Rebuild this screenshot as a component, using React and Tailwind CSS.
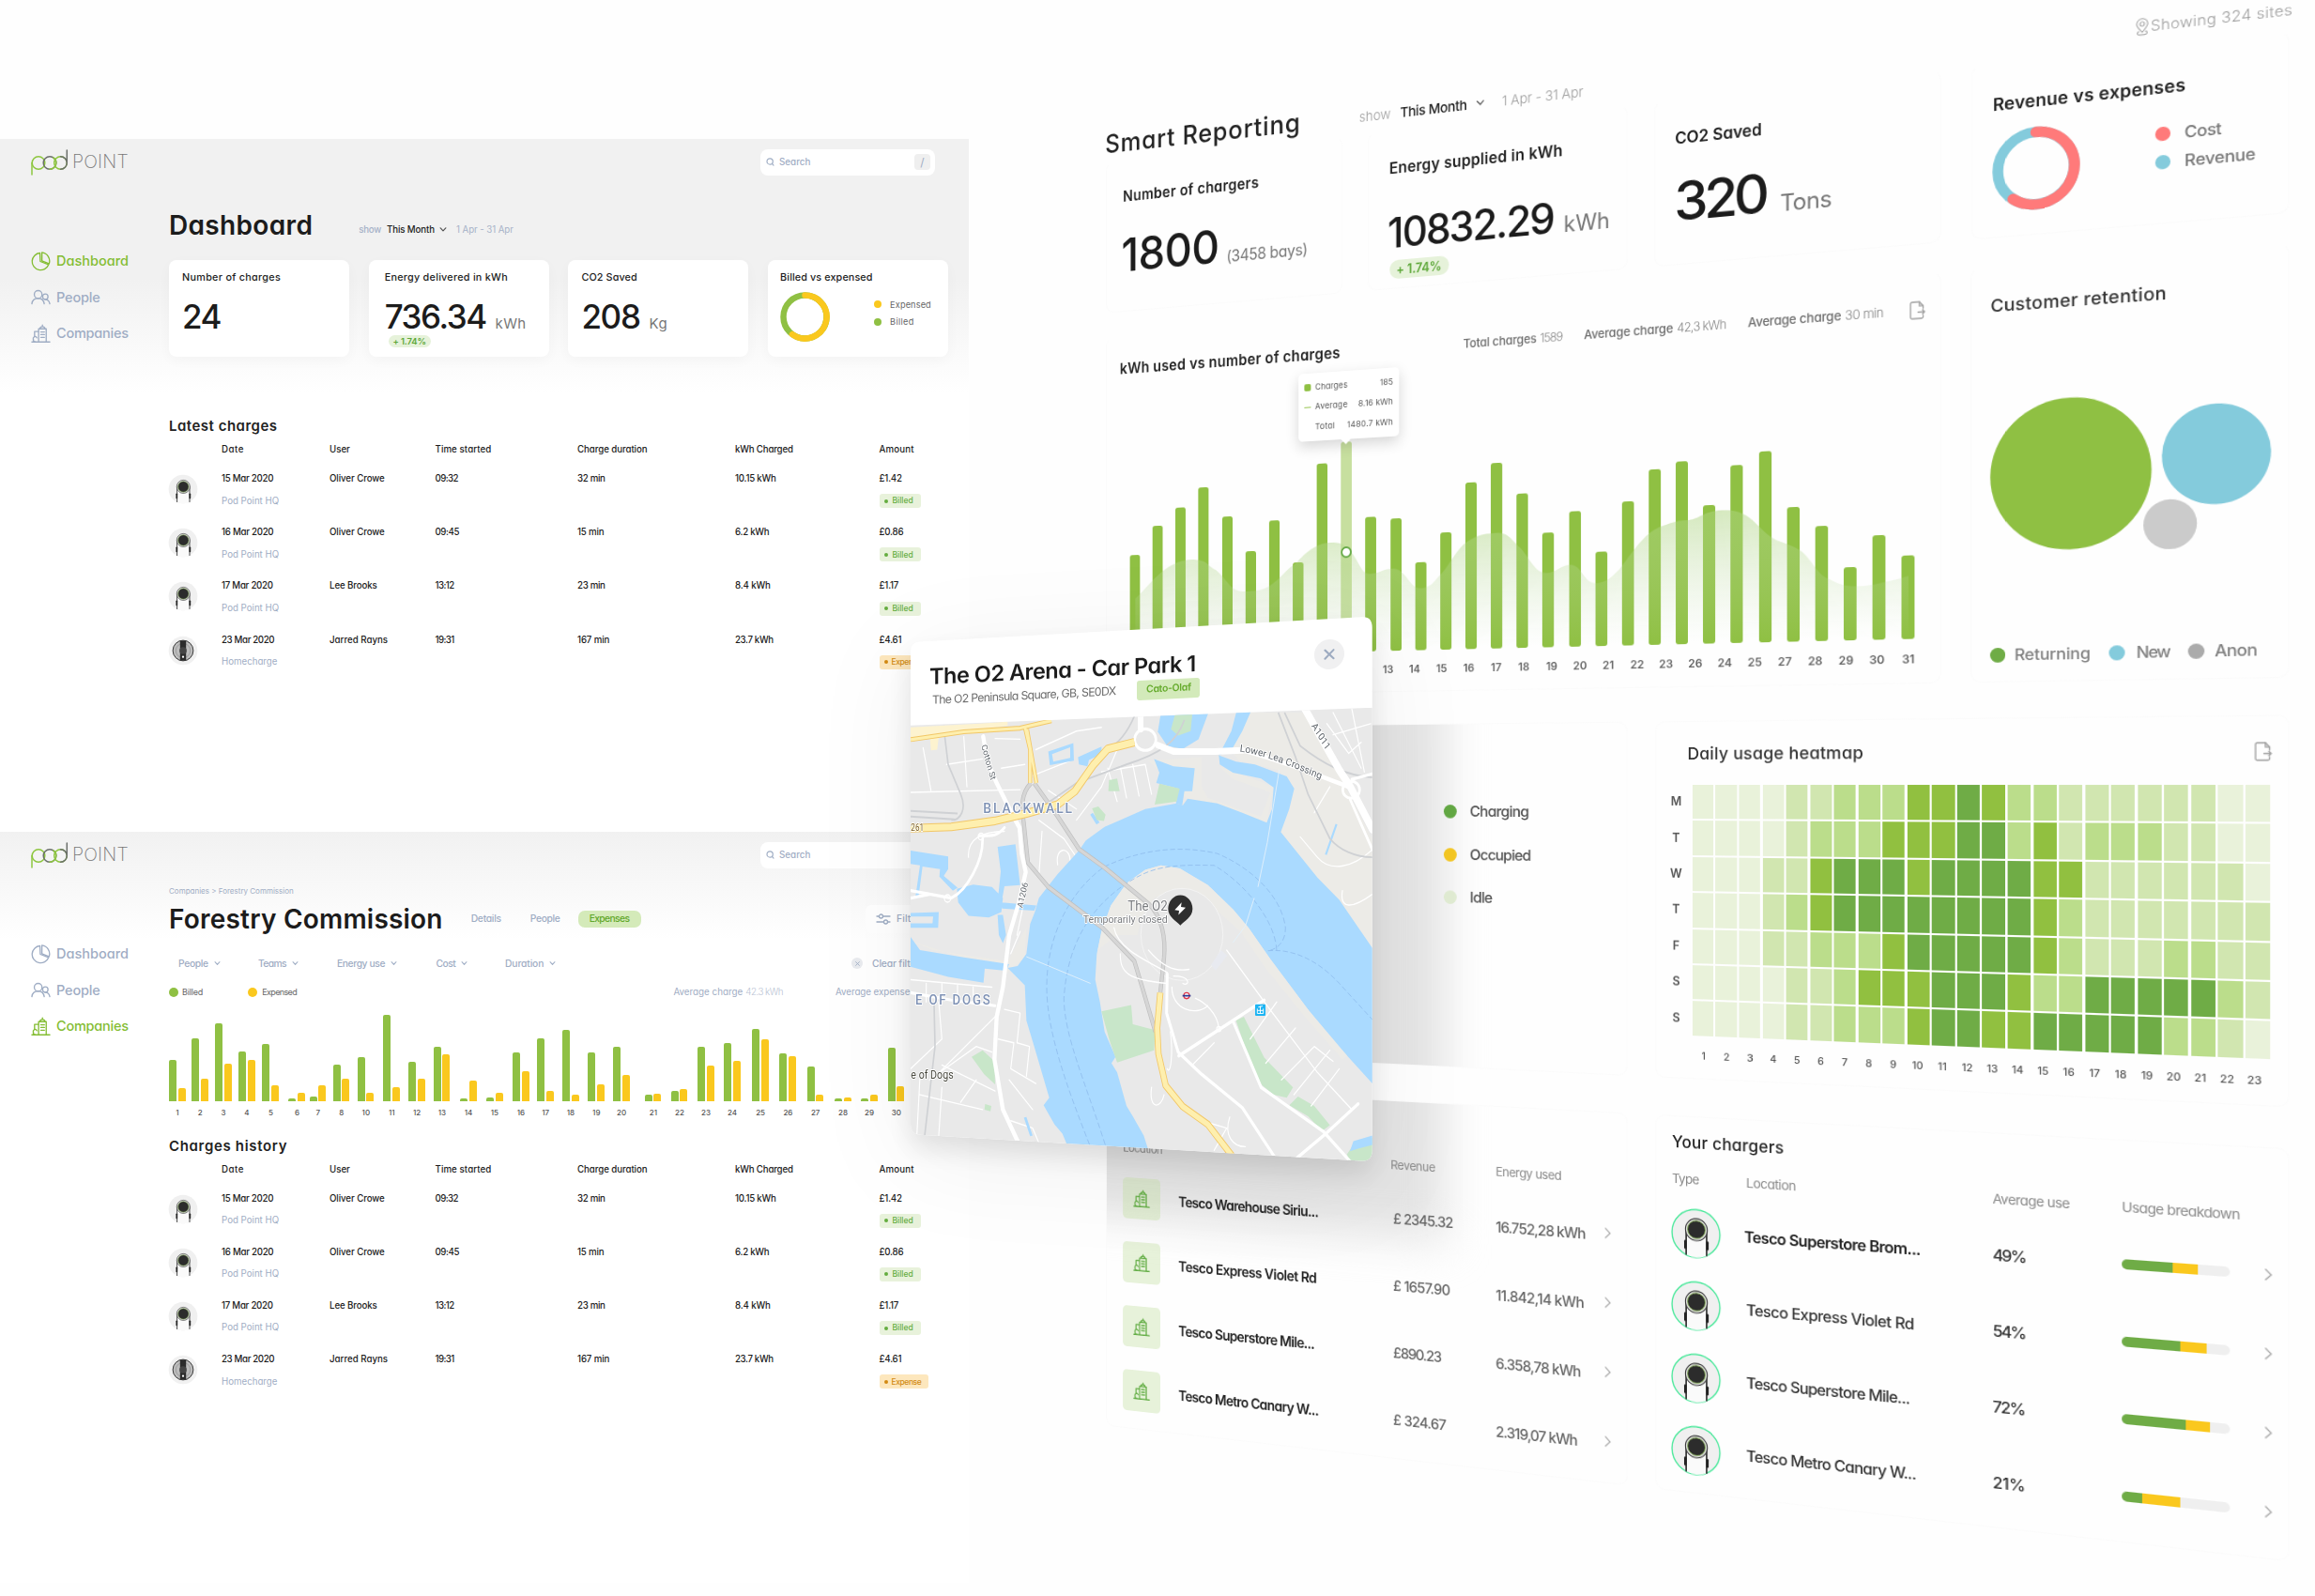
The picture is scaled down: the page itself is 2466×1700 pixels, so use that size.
import React, { useLayoutEffect, useRef } from "react";

/* Single-line text tracked so that it fills a given width. */
function Fit({ w, className = "", children }) {
  const ref = useRef(null);
  useLayoutEffect(() => {
    const el = ref.current;
    el.style.letterSpacing = "0px";
    el.style.letterSpacing = (w - el.offsetWidth) / el.textContent.length + "px";
  }, [w, children]);
  return (
    <span ref={ref} className={"block w-fit shrink-0 justify-self-start whitespace-nowrap leading-none " + className}>
      {children}
    </span>
  );
}

/* ---------- icons ---------- */

const PieIcon = () => (
  <svg viewBox="0 0 22 22" className="size-[21px]" fill="none" stroke="currentColor" strokeWidth="1.4" strokeLinejoin="round">
    <path d="M10 1.6A9.5 9.5 0 1 0 19.6 14.6L10.4 11Z" />
    <path d="M12.2 1v9.4l8 3.2A9.6 9.6 0 0 0 12.2 1Z" />
  </svg>
);
const PeopleIcon = () => (
  <svg viewBox="0 0 22 22" className="size-[21px]" fill="none" stroke="currentColor" strokeWidth="1.4" strokeLinecap="round">
    <circle cx="8" cy="8" r="4.3" />
    <path d="M1 18.5c.4-3.800 3.200-6.200 7-6.200s6.200 2.200 6.800 6.200" />
    <circle cx="16" cy="10.500" r="3" />
    <path d="M15.500 13.700c3-.2 5 1.800 5.500 4.800" />
  </svg>
);
const BuildingIcon = ({ className = "size-[21px]" }) => (
  <svg viewBox="0 0 22 22" className={className} fill="none" stroke="currentColor" strokeWidth="1.4" strokeLinecap="round" strokeLinejoin="round">
    <path d="M8.500 20V5.500h8.500V20M10 5.300C10.200 3.800 11.300 3 12.800 3s2.600.8 2.800 2.300M12.800 3V1.200" />
    <path d="M11 9h4M11 12h4M11 15h4M8.300 8.500H4V14M1 20.200h20" />
    <path d="M5 20a2.200 3 0 1 1 1.500-4.500M2.800 17.500v2.500" />
  </svg>
);
const Chevron = ({ className }) => (
  <svg viewBox="0 0 10 6" className={className} fill="none" stroke="currentColor" strokeWidth="1.5" strokeLinecap="round" strokeLinejoin="round">
    <path d="M1.500 1 5 4.800 8.500 1" />
  </svg>
);
const Next = () => (
  <svg viewBox="0 0 7 12" className="h-3 w-[7px] text-[#a8a8a8]" fill="none" stroke="currentColor" strokeWidth="1.2" strokeLinecap="round">
    <path d="M1 1l5 5-5 5" />
  </svg>
);
const Cross = ({ className }) => (
  <svg viewBox="0 0 10 10" className={className} fill="none" stroke="currentColor" strokeWidth="1.7" strokeLinecap="round">
    <path d="M1.200 1.200l7.600 7.600M8.800 1.200 1.200 8.800" />
  </svg>
);
const ExportIcon = () => (
  <svg viewBox="0 0 16 19" className="h-[19px] w-4 text-[#a3a3a3]" fill="none" stroke="currentColor" strokeWidth="1.300" strokeLinejoin="round" strokeLinecap="round">
    <path d="M13.500 8V5.200L9.800 1H2.500A1.500 1.500 0 0 0 1 2.500v14A1.500 1.500 0 0 0 2.500 18H12a1.500 1.500 0 0 0 1.500-1.500V15" />
    <path d="M9.800 1v4.200h3.700M8.500 11.500H15M13 9.500l2 2-2 2" />
  </svg>
);
const SearchIcon = () => (
  <svg viewBox="0 0 10 10" className="size-[9px]" fill="none" stroke="currentColor" strokeWidth="1.300" strokeLinecap="round">
    <circle cx="4.600" cy="4.400" r="3.500" />
    <path d="M7.200 7l1.700 2" />
  </svg>
);
const PinIcon = () => (
  <svg viewBox="0 0 15 19" className="h-[18px] w-[14px]" fill="none" stroke="currentColor" strokeWidth="1">
    <path d="M7.500 15C4.500 11.500 2 9 2 6.200a5.500 5.500 0 0 1 11 0C13 9 10.500 11.500 7.500 15Z" />
    <circle cx="7.500" cy="6.200" r="2.200" />
    <path d="M4.500 14c-1.600.5-1.900 1.200-1.900 1.800 0 1 2 2 4.900 2s4.900-1 4.900-2c0-.6-.3-1.300-1.900-1.800" />
  </svg>
);
const SlidersIcon = () => (
  <svg viewBox="0 0 16 12" className="h-3 w-4" fill="none" stroke="currentColor" strokeWidth="1.300" strokeLinecap="round">
    <path d="M1 3h2.500M7.500 3H15M1 9h7.500M12.500 9H15" />
    <circle cx="5.500" cy="3" r="2" />
    <circle cx="10.500" cy="9" r="2" />
  </svg>
);

function Charger({ className, ring }) {
  return (
    <svg viewBox="0 0 50 50" className={className}>
      <circle cx="25" cy="25" r="24" fill="#f0f0f0" stroke={ring || "none"} strokeWidth="1.300" />
      <path d="M15.300 20v27M35.700 20v27" stroke="#2d2d2d" strokeWidth="1.700" />
      <path d="M16 20h19v27a24 24 0 0 1-19 0Z" fill="#fafafa" />
      <rect x="13.200" y="32" width="2.600" height="9" rx="1.200" fill="#222" />
      <rect x="35.200" y="32" width="2.600" height="9" rx="1.200" fill="#222" />
      <circle cx="25.500" cy="21" r="11" fill="#dcdcdc" stroke="#3a3a3a" strokeWidth="1" />
      <circle cx="25.500" cy="21" r="8.900" fill="#2c2c2c" stroke="#8bb85a" strokeWidth=".8" />
    </svg>
  );
}
const HomeCharger = ({ className }) => (
  <svg viewBox="0 0 50 50" className={className}>
    <circle cx="25" cy="25" r="24" fill="#f1f1f1" />
    <circle cx="25" cy="25" r="17" fill="#bdbdbd" stroke="#333" strokeWidth="1.500" />
    <circle cx="25" cy="25" r="12" fill="none" stroke="#8a8a8a" strokeWidth="1" />
    <path d="M20 8.500h10v33H20Z" fill="#2b2b2b" />
    <circle cx="25" cy="25" r="6" fill="#444" />
    <circle cx="25" cy="35.500" r="1.800" fill="#fff" />
  </svg>
);

const Logo = () => (
  <div className="flex items-center">
    <svg viewBox="0 0 40 28" className="h-7 w-10" fill="none" strokeWidth="1.500" strokeLinecap="round">
      <path d="M1 27V14.500" stroke="#8dc63f" />
      <circle cx="8" cy="14.500" r="6.800" stroke="#8dc63f" />
      <circle cx="20" cy="14.500" r="6.800" stroke="#6b6f6b" />
      <path d="M20 21.300a6.800 6.800 0 0 0 6.800-6.800 6.800 6.800 0 0 0-3-5.600" stroke="#8dc63f" />
      <circle cx="31.500" cy="14.500" r="6.800" stroke="#8dc63f" />
      <path d="M31.500 7.700a6.800 6.800 0 0 1 6.800 6.800V1M38.300 14.500a6.800 6.800 0 0 1-6.800 6.800" stroke="#6b6f6b" />
    </svg>
    <Fit w={60} className="ml-[4px] text-[19.500px] font-extralight text-[#777]">POINT</Fit>
  </div>
);

/* ---------- shared pieces for the two flat screens ---------- */

const NAV = [
  ["Dashboard", PieIcon, 77],
  ["People", PeopleIcon, 47],
  ["Companies", BuildingIcon, 77],
];

function Sidebar({ active }) {
  return (
    <nav className="flex w-[180px] shrink-0 flex-col pl-[33px] pt-[61px]">
      {NAV.map(([label, Icon, w]) => (
        <div key={label} className={"flex h-[38.500px] items-center gap-[6px] " + (label === active ? "text-[#84bd33]" : "text-[#9fadc4]")}>
          <Icon />
          <Fit w={w} className="text-[14.500px] font-medium">{label}</Fit>
        </div>
      ))}
    </nav>
  );
}

const TopBar = () => (
  <div className="flex h-[50px] items-start justify-between pl-[33px] pr-[36px] pt-[10.500px]">
    <Logo />
    <div className="flex h-[28px] w-[186px] items-center rounded-lg bg-white pl-[6px] pr-[5px] text-[#9fadc4]">
      <SearchIcon />
      <Fit w={33} className="ml-[5px] text-[9.800px] font-medium">Search</Fit>
      <span className="ml-auto flex h-[17px] w-[17px] items-center justify-center rounded bg-[#efefef] text-[12px] leading-none">/</span>
    </div>
  </div>
);

const ROWS = [
  ["15 Mar 2020", 55, "Oliver Crowe", 59, "09:32", 24, "32 min", 30, "10.15 kWh", 44, "£1.42", 24],
  ["16 Mar 2020", 55, "Oliver Crowe", 59, "09:45", 26, "15 min", 28, "6.2 kWh", 36, "£0.86", 26],
  ["17 Mar 2020", 55, "Lee Brooks", 51, "13:12", 20, "23 min", 30, "8.4 kWh", 38, "£1.17", 21],
  ["23 Mar 2020", 56, "Jarred Rayns", 62, "19:31", 20, "167 min", 34, "23.7 kWh", 41, "£4.61", 24],
];

function ChargeTable({ title, titleWidth }) {
  const cols = "grid grid-cols-[56px_115px_112.5px_151.5px_168px_153.5px_auto]";
  return (
    <section className="text-[9.700px] font-medium text-[#1c1c1c]">
      <Fit w={titleWidth} className="text-[15px] font-semibold text-[#222]">{title}</Fit>
      <div className={cols + " mt-[6.500px] h-[23px] items-center"}>
        <span />
        <Fit w={24}>Date</Fit>
        <Fit w={22}>User</Fit>
        <Fit w={60}>Time started</Fit>
        <Fit w={75}>Charge duration</Fit>
        <Fit w={62}>kWh Charged</Fit>
        <Fit w={37}>Amount</Fit>
      </div>
      <div className="pt-[2px]">
        {ROWS.map((r, i) => (
          <div key={i} className={cols + " h-[57.200px] pt-[12.500px]"}>
            {i === 3 ? <HomeCharger className="-ml-px size-[32px]" /> : <Charger className="-ml-px size-[32px]" />}
            <div className="flex flex-col gap-[13.800px]">
              <Fit w={r[1]}>{r[0]}</Fit>
              <Fit w={i === 3 ? 59 : 61} className="font-normal text-[#9fadc4]">{i === 3 ? "Homecharge" : "Pod Point HQ"}</Fit>
            </div>
            <Fit w={r[3]}>{r[2]}</Fit>
            <Fit w={r[5]}>{r[4]}</Fit>
            <Fit w={r[7]}>{r[6]}</Fit>
            <Fit w={r[9]}>{r[8]}</Fit>
            <div className="flex flex-col items-start gap-[11.500px]">
              <Fit w={r[11]}>{r[10]}</Fit>
              {i === 3 ? (
                <span className="flex h-[15px] w-[52px] items-center gap-[4px] rounded-[3px] bg-[#fde7bd] pl-[5px] text-[8.500px] font-medium text-[#d28a12]">
                  <i className="size-[4px] rounded-full bg-[#d28a12]" />
                  <Fit w={32}>Expense</Fit>
                </span>
              ) : (
                <span className="flex h-[15px] w-[44px] items-center gap-[5px] rounded-[3px] bg-[#e8f2db] pl-[5px] text-[8.500px] font-medium text-[#64ad3f]">
                  <i className="size-[4px] rounded-full bg-[#64ad3f]" />
                  <Fit w={22}>Billed</Fit>
                </span>
              )}
            </div>
          </div>
        ))}
      </div>
    </section>
  );
}

/* ---------- screen 1: dashboard ---------- */

function StatCard({ label, w, pad, children }) {
  return (
    <div className={"h-[103px] rounded-lg bg-white pt-[13.500px] shadow-[0_4px_14px_rgba(0,0,0,0.03)] " + pad}>
      <Fit w={w} className="text-[10.800px] font-medium text-[#1c1c1c]">{label}</Fit>
      {children}
    </div>
  );
}

function Dashboard() {
  return (
    <section className="h-[738px] w-[1032px] bg-[linear-gradient(#f1f1f1_0px,#f1f1f1_150px,#fff_270px)]">
      <TopBar />
      <div className="flex">
        <Sidebar active="Dashboard" />
        <main className="w-[830px]">
          <div className="flex h-[79px] items-center pt-[5px]">
            <Fit w={153} className="text-[28px] font-semibold text-[#1c1c1c]">Dashboard</Fit>
            <div className="mt-[9px] ml-[49px] flex items-center text-[9.700px] font-medium text-[#a6b2c8]">
              <Fit w={24}>show</Fit>
              <Fit w={51} className="ml-[6px] text-[#1c1c1c]">This Month</Fit>
              <Chevron className="ml-[5px] w-[8px] text-[#555]" />
              <Fit w={61} className="ml-[10px] font-normal">1 Apr - 31 Apr</Fit>
            </div>
          </div>
          <div className="grid grid-cols-4 gap-[20.800px]">
            <StatCard label="Number of charges" w={105} pad="pl-[14px]">
              <Fit w={41} className="mt-[19px] text-[35px] font-medium text-[#1c1c1c]">24</Fit>
            </StatCard>
            <StatCard label="Energy delivered in kWh" w={131} pad="pl-[17px]">
              <div className="mt-[19px] flex items-baseline">
                <Fit w={108} className="text-[35px] font-medium text-[#1c1c1c]">736.34</Fit>
                <Fit w={33} className="ml-[10px] text-[15px] text-[#777]">kWh</Fit>
              </div>
              <span className="mt-[2px] ml-[4px] flex h-[13px] w-[45px] items-center justify-center rounded-full bg-[#e6f2da] text-[9.500px] font-semibold text-[#5ea83a]">
                <Fit w={35}>+ 1.74%</Fit>
              </span>
            </StatCard>
            <StatCard label="CO2 Saved" w={59} pad="pl-[14px]">
              <div className="mt-[19px] flex items-baseline">
                <Fit w={62} className="text-[35px] font-medium text-[#1c1c1c]">208</Fit>
                <Fit w={20} className="ml-[10px] text-[15px] text-[#777]">Kg</Fit>
              </div>
            </StatCard>
            <StatCard label="Billed vs expensed" w={99} pad="pl-[13px]">
              <div className="mt-[10px] flex">
                <svg viewBox="0 0 53 53" className="size-[53px]" fill="none" strokeWidth="6.500">
                  <circle cx="26.500" cy="26.500" r="23" stroke="#8fc043" />
                  <path d="M26.500 3.500a23 23 0 1 1-13.500 41.600" stroke="#fac81e" strokeLinecap="round" />
                </svg>
                <div className="ml-[47px] mt-[8.500px] flex flex-col gap-[9px] text-[9.200px] text-[#666]">
                  <span className="flex items-center gap-[9px]"><i className="size-2 rounded-full bg-[#fac81e]" /><Fit w={44}>Expensed</Fit></span>
                  <span className="flex items-center gap-[9px]"><i className="size-2 rounded-full bg-[#8fc043]" /><Fit w={26}>Billed</Fit></span>
                </div>
              </div>
            </StatCard>
          </div>
          <div className="mt-[66px]">
            <ChargeTable title="Latest charges" titleWidth={116} />
          </div>
        </main>
      </div>
    </section>
  );
}

/* ---------- screen 2: company expenses ---------- */

/* [label, offset, billed height, expensed height] */
const EXPENSES = [
  [1, 0, 44, 14], [2, 24.2, 67, 24], [3, 49.1, 83, 40], [4, 74, 53, 44], [5, 99.500, 61, 17],
  [6, 127.500, 3, 9], [7, 149.900, 5, 17], [8, 174.700, 39, 24], [10, 200.900, 47, 9], [11, 228.300, 92, 15],
  [12, 255.100, 42, 24], [13, 281.900, 58, 50], [14, 310, 3, 22], [15, 338, 4, 9], [16, 366, 52, 32],
  [17, 392.200, 67, 11], [18, 419, 76, 7], [19, 446.400, 52, 18], [20, 473.200, 58, 28], [21, 507, 7, 8],
  [22, 535, 11, 13], [23, 563.100, 58, 38], [24, 591.200, 62, 43], [25, 621.200, 77, 66], [26, 650.500, 51, 48],
  [27, 679.800, 37, 7], [28, 709.200, 3, 4], [29, 737.200, 3, 7], [30, 766, 57, 16],
];

function ExpenseChart() {
  return (
    <div className="mt-[10px] flex h-[107px] items-end">
      {EXPENSES.map(([d, x, a, b], i) => (
        <div key={d} className="shrink-0" style={{ width: i < EXPENSES.length - 1 ? EXPENSES[i + 1][1] - x : 18 }}>
          <div className="flex items-end gap-[1.600px]">
            <i className="w-2 rounded-t-[2px] bg-[#8fc043]" style={{ height: a }} />
            <i className="w-2 rounded-t-[2px] bg-[#fac81e]" style={{ height: b }} />
          </div>
          <div className="mt-[8px] w-[18px] text-center text-[8px] leading-none font-medium text-[#555]">{d}</div>
        </div>
      ))}
    </div>
  );
}

const FILTERS = [["People", 32, 85], ["Teams", 30, 84], ["Energy use", 51, 105.500], ["Cost", 21, 73.500], ["Duration", 41, 60]];

function Company() {
  return (
    <section className="h-[800px] w-[1032px] bg-[linear-gradient(#f1f1f1_0px,#fff_115px)]">
      <TopBar />
      <div className="flex">
        <Sidebar active="Companies" />
        <main className="w-[852px]">
          <div className="flex h-[26px] items-center">
            <Fit w={133} className="text-[8px] text-[#9fadc4]">Companies &gt; Forestry Commission</Fit>
          </div>
          <div className="flex h-[33px] items-center text-[10.300px] font-medium text-[#9fadc4]">
            <Fit w={292} className="text-[28px] font-semibold text-[#1c1c1c]">Forestry Commission</Fit>
            <Fit w={32} className="ml-[30px]">Details</Fit>
            <Fit w={32} className="ml-[31px]">People</Fit>
            <span className="ml-[19px] flex h-[18px] w-[67px] items-center justify-center rounded-[7px] bg-[#d4eab9] text-[#62a82c]">
              <Fit w={43}>Expenses</Fit>
            </span>
            <span className="ml-auto flex h-[30px] w-[110px] items-center gap-[6px] rounded-md bg-white pl-[11px]">
              <SlidersIcon /><Fit w={31}>Filters</Fit>
            </span>
          </div>
          <div className="mt-[16px] flex h-[30px] items-center pl-[10px] text-[10.300px] font-medium text-[#9fadc4]">
            {FILTERS.map(([t, w, cell]) => (
              <span key={t} className="flex items-center gap-[6px]" style={{ width: cell }}>
                <Fit w={w}>{t}</Fit>
                <Chevron className="w-[7px]" />
              </span>
            ))}
            <span className="ml-auto flex w-[125px] items-center gap-[10px]">
              <i className="flex size-3 items-center justify-center rounded-full bg-[#e9ebef]"><Cross className="size-[5px]" /></i>
              <Fit w={56}>Clear filters</Fit>
            </span>
          </div>
          <div className="flex h-[31px] items-center text-[9px] text-[#666]">
            <i className="size-[10px] rounded-full bg-[#8fc043]" />
            <Fit w={22} className="ml-[4px]">Billed</Fit>
            <i className="ml-[48px] size-[10px] rounded-full bg-[#fac81e]" />
            <Fit w={37} className="ml-[5px]">Expensed</Fit>
            <span className="ml-auto flex gap-[3px] text-[9.800px] text-[#9fadc4]">
              <Fit w={74}>Average charge</Fit>
              <Fit w={40} className="font-light text-[#b9c3d4]">42.3 kWh</Fit>
            </span>
            <span className="ml-[56px] w-[142px] text-[9.800px] text-[#9fadc4]"><Fit w={79}>Average expense</Fit></span>
          </div>
          <ExpenseChart />
          <div className="mt-[23.500px]">
            <ChargeTable title="Charges history" titleWidth={126} />
          </div>
        </main>
      </div>
    </section>
  );
}

/* ---------- tilted reporting board ---------- */

const panel = "rounded-[10px] border border-[#fbfbfb]";

function Metric({ title, tw, pad = "pl-[21px]", children }) {
  return (
    <div className={"h-[177px] pt-[33px] border-t-transparent! " + pad + " " + panel}>
      <Fit w={tw} className="text-[17px] font-semibold text-[#222]">{title}</Fit>
      {children}
    </div>
  );
}

const LOAD = [
  119, 152, 172, 194, 159, 118, 151.500, 103, 214, 237, 151, 148, 98, 129.500, 184, 204, 169, 124.500, 147, 102,
  154.500, 188, 195, 147, 188, 201, 141, 120, 76, 107.500, 86,
];
const LOAD_LABELS = [13, 14, 15, 16, 17, 18, 19, 20, 21, 22, 23, 26, 24, 25, 27, 28, 29, 30, 31];

const WAVE =
  "M48 618C65 605 85 575 119 575C140 575 140 584 150 588C165 600 168 613 184 614C205 614 210 612 216 609C232 600 236 590 249 584C262 570 275 562 291 562C302 562 306 564 310 569C325 580 325 598 337 599C350 599 352 594 364 594C380 594 384 617 397 617C410 617 412 610 422 601C432 590 436 580 447 570C458 562 468 559 484 559C498 559 500 566 511 576C522 588 528 605 541 605C552 605 556 597 567 597C580 597 582 618 596 618C608 617 612 612 621 604C640 580 650 564 668 559C680 555 684 554 694 554C706 554 712 545 731 545C745 545 750 548 757 552C768 560 776 573 788 579C800 584 806 586 813 591C826 602 830 618 843 622C854 629 862 630 873 630C884 630 890 628 897 627C906 625 912 624 922 621V686H48Z";

function UsageChart() {
  return (
    <div className={"relative flex h-[422px] w-[944px] flex-col pt-[29px] pl-[17px] pr-[14px] border-t-transparent! " + panel}>
      <div className="flex h-[17px] items-center text-[13px] text-[#6d6d6d]">
        <Fit w={274} className="text-[17px] font-semibold text-[#222]">kWh used vs number of charges</Fit>
        <Fit w={83} className="ml-[144px] font-medium">Total charges</Fit>
        <Fit w={25} className="ml-[4px] font-light text-[#888]">1589</Fit>
        <Fit w={97} className="ml-[24px] font-medium">Average charge</Fit>
        <Fit w={52} className="ml-[4px] font-light text-[#888]">42,3 kWh</Fit>
        <Fit w={96} className="ml-[23px] font-medium">Average charge</Fit>
        <Fit w={39} className="ml-[4px] font-light text-[#888]">30 min</Fit>
        <span className="ml-auto"><ExportIcon /></span>
      </div>
      <div className="mt-[88.500px] ml-[13px] mr-[10.500px] flex h-[240px] items-end justify-between">
        {LOAD.map((h, i) => (
          <i key={i} className={"w-[13px] rounded-[3px] " + (i === 9 ? "bg-[#c7df9f]" : "bg-[#8fc043]")} style={{ height: h }} />
        ))}
      </div>
      <div className="mt-[15px] ml-auto mr-[7px] flex w-[583px] justify-between text-[12px] leading-none font-semibold text-[#666]">
        {LOAD_LABELS.map((d) => (
          <span key={d} className="w-[20px] text-center">{d}</span>
        ))}
      </div>
      <svg viewBox="48 540 874 146" preserveAspectRatio="none" className="absolute top-[229px] left-[37px] h-[146px] w-[874px]">
        <defs>
          <linearGradient id="wave" x1="0" y1="0" x2="0" y2="1">
            <stop offset="0" stopColor="#aed581" stopOpacity=".5" />
            <stop offset="1" stopColor="#c8e0b8" stopOpacity="0" />
          </linearGradient>
        </defs>
        <path d={WAVE} fill="url(#wave)" />
      </svg>
      <i className="absolute top-[256px] left-[291.500px] size-[13px] rounded-full border-2 border-[#63a844] bg-white" />
      <div className="absolute top-[57.500px] left-[241px] flex h-[77px] w-[120px] flex-col justify-center gap-[13px] rounded-[5px] bg-white px-[7px] text-[9.500px] text-[#555] shadow-[0_6px_16px_rgba(0,0,0,0.16)]">
        <span className="flex items-center"><i className="mr-[5px] size-2 rounded-[2px] bg-[#8fc043]" /><Fit w={39}>Charges</Fit><Fit w={16} className="ml-auto">185</Fit></span>
        <span className="flex items-center"><i className="mr-[5px] h-px w-2 bg-[#8fc043]" /><Fit w={39}>Average</Fit><Fit w={41} className="ml-auto">8.16 kWh</Fit></span>
        <span className="flex items-center pl-[13px]"><Fit w={24}>Total</Fit><Fit w={54} className="ml-auto">1480.7 kWh</Fit></span>
        <i className="absolute bottom-[-4px] left-[53px] size-2 rotate-45 bg-white" />
      </div>
    </div>
  );
}

const HEAT = [
  ["M", "00001122233432211111100"],
  ["T", "00001222333442312221100"],
  ["W", "00011344434444331111110"],
  ["T", "00012344444444321111111"],
  ["F", "00011222344444321112211"],
  ["S", "00001123334443224444421"],
  ["S", "00001122234433444442210"],
];
const HEAT_COLOURS = ["bg-[#e9f2da]", "bg-[#d1e6b0]", "bg-[#bbdd8b]", "bg-[#91c040]", "bg-[#6fac46]"];

const LOCATIONS = [
  ["Tesco Warehouse Siriu...", 173, "£ 2345.32", 69, "16.752,28 kWh", 100],
  ["Tesco Express Violet Rd", 171, "£ 1657.90", 66, "11.842,14 kWh", 99],
  ["Tesco Superstore Mile...", 168, "£890.23", 56, "6.358,78 kWh", 95],
  ["Tesco Metro Canary W...", 173, "£ 324.67", 61, "2.319,07 kWh", 91],
];
const CHARGERS = [
  ["Tesco Superstore Brom...", 179, "49%", 47, 24],
  ["Tesco Express Violet Rd", 171, "54%", 55, 24],
  ["Tesco Superstore Mile...", 167, "72%", 60, 22],
  ["Tesco Metro Canary W...", 173, "21%", 19, 36],
];

function Board() {
  const locCols = "grid grid-cols-[71px_259px_121.5px_121px_auto] items-center";
  const chCols = "grid grid-cols-[78.500px_248px_122.500px_129.500px_auto] items-center";
  return (
    <div className="col-start-1 row-start-1 ml-[1103px] h-[1700px] w-[1302px] origin-[697px_836px] pr-[23px] pl-[10px] [transform:matrix3d(1,0,0,-0.00015232,0,1,0,0,0,0,1,0,0,0,0,1)]">
      <div className="flex h-[104px] items-end">
        <div className="flex h-10 w-full items-center text-[15px] text-[#a0a0a0]">
          <Fit w={246} className="-mt-[3px] -ml-px text-[29.500px] font-medium text-[#222]">Smart Reporting</Fit>
          <Fit w={37} className="mt-px ml-[70px] font-light">show</Fit>
          <Fit w={78} className="mt-px ml-[11px] font-medium text-[#222]">This Month</Fit>
          <Chevron className="ml-[10px] w-[10px] text-[#666]" />
          <Fit w={91} className="ml-[20px] font-light">1 Apr - 31 Apr</Fit>
          <span className="ml-auto mr-[-3px] flex items-center text-[14.500px] font-light">
            <PinIcon /><Fit w={128} className="ml-px">Showing 324 sites</Fit>
          </span>
        </div>
      </div>

      <div className="grid grid-cols-4 gap-[29.400px]">
        <Metric title="Number of chargers" tw={172}>
          <div className="mt-[33px] flex items-baseline">
            <Fit w={124} className="-ml-[2px] text-[54px] font-medium text-[#1c1c1c]">1800</Fit>
            <Fit w={100} className="ml-[9px] text-[18px] text-[#777]">(3458 bays)</Fit>
          </div>
        </Metric>
        <Metric title="Energy supplied in kWh" tw={198} pad="pl-[25px]">
          <div className="mt-[40px] flex items-baseline">
            <Fit w={190} className="-ml-[2px] text-[46px] font-medium text-[#1c1c1c]">10832.29</Fit>
            <Fit w={51} className="ml-[11px] text-[24px] text-[#777]">kWh</Fit>
          </div>
          <span className="mt-[8px] flex h-[21px] w-[69px] items-center justify-center rounded-full bg-[#e6f2da] text-[14px] font-semibold text-[#5ea83a]">
            <Fit w={53}>+ 1.74%</Fit>
          </span>
        </Metric>
        <Metric title="CO2 Saved" tw={91}>
          <div className="mt-[29px] flex items-baseline">
            <Fit w={97} className="-ml-px text-[58px] font-medium text-[#1c1c1c]">320</Fit>
            <Fit w={53} className="ml-[15px] text-[24px] text-[#777]">Tons</Fit>
          </div>
        </Metric>
        <Metric title="Revenue vs expenses" tw={181} pad="pl-[20px]">
          <div className="mt-[16.500px] flex">
            <svg viewBox="0 0 84 84" className="-ml-px size-[84px]" fill="none" strokeWidth="10.500">
              <circle cx="42" cy="42" r="36.500" stroke="#84cbdc" />
              <path d="M42 5.500a36.500 36.500 0 1 1-22 65.500" stroke="#ff7a7a" strokeLinecap="round" />
            </svg>
            <div className="ml-[70.500px] mt-[12.500px] flex flex-col gap-[12px] text-[16px] font-medium text-[#777]">
              <span className="flex items-center gap-[12.500px]"><i className="size-[14px] rounded-full bg-[#ff7a7a]" /><Fit w={33}>Cost</Fit></span>
              <span className="flex items-center gap-[12.500px]"><i className="size-[14px] rounded-full bg-[#84cbdc]" /><Fit w={64}>Revenue</Fit></span>
            </div>
          </div>
        </Metric>
      </div>

      <div className="mt-[29px] flex gap-[29.400px]">
        <UsageChart />
        <div className={"flex-1 pt-[30px] pl-[18px] border-t-transparent! " + panel}>
          <Fit w={166} className="text-[17.500px] font-medium text-[#333]">Customer retention</Fit>
          <svg viewBox="1002 446 262 158" className="mt-[87.500px] -ml-px h-[158px] w-[262px]">
            <circle cx="1079.400" cy="523.600" r="76.200" fill="#8fc043" />
            <circle cx="1214.500" cy="511.100" r="49.300" fill="#84cbdc" />
            <circle cx="1172.600" cy="578.400" r="24.600" fill="#cbcbcb" />
          </svg>
          <div className="mt-[92px] flex h-4 items-center text-[16px] font-medium text-[#808080]">
            <i className="size-[15px] rounded-full bg-[#6fac46]" /><Fit w={72} className="ml-[8px]">Returning</Fit>
            <i className="ml-[17px] size-[15px] rounded-full bg-[#84cbdc]" /><Fit w={31} className="ml-[11px]">New</Fit>
            <i className="ml-[17px] size-[15px] rounded-full bg-[#ababab]" /><Fit w={38} className="ml-[9px]">Anon</Fit>
          </div>
        </div>
      </div>

      <div className="mt-[35.500px] grid h-[381.500px] grid-cols-2 gap-[30px]">
        <div className={"relative overflow-hidden " + panel}>
          <div className="absolute -top-40 -bottom-40 -left-40 w-[575px] bg-[#e4e4e4] blur-[24px]" />
          <div className="relative flex flex-col gap-[31.500px] pt-[89px] pl-[413px] text-[16.500px] font-medium text-[#505050]">
            <span className="flex h-4 items-center gap-[15px]"><i className="size-[15px] rounded-full bg-[#63a844]" /><Fit w={67}>Charging</Fit></span>
            <span className="flex h-4 items-center gap-[15px]"><i className="size-[15px] rounded-full bg-[#f3c623]" /><Fit w={69}>Occupied</Fit></span>
            <span className="flex h-4 items-center gap-[15px]"><i className="size-[15px] rounded-full bg-[#e0ebd2]" /><Fit w={26}>Idle</Fit></span>
          </div>
        </div>
        <div className={"pt-[25.500px] pl-[12px] pr-[16px] " + panel}>
          <div className="flex h-[18px] items-center justify-between pl-[22px]">
            <Fit w={182} className="text-[17.500px] font-medium text-[#333]">Daily usage heatmap</Fit>
            <span className="-mr-[2px]"><ExportIcon /></span>
          </div>
          <div className="mt-[24px] flex flex-col gap-[2px]">
            {HEAT.map(([d, cells], r) => (
              <div key={r} className="flex h-[36.400px] items-stretch gap-[2.400px]">
                <span className="mr-[5px] flex w-[20px] items-center justify-center pt-px text-[12.500px] font-semibold text-[#555]">{d}</span>
                {cells.split("").map((c, i) => (
                  <i key={i} className={"flex-1 " + HEAT_COLOURS[c]} />
                ))}
              </div>
            ))}
          </div>
          <div className="mt-[17.500px] flex pr-[2px] pl-[27px] text-[10.500px] leading-none font-medium text-[#555]">
            {HEAT[0][1].split("").map((_, i) => (
              <span key={i} className="flex-1 text-center">{i + 1}</span>
            ))}
          </div>
        </div>
      </div>

      <div className="mt-[39.500px] grid h-[401px] grid-cols-2 gap-[30px] text-[13.500px] text-[#8a8a8a]">
        <div className={"relative overflow-hidden pt-[60px] " + panel}>
          <div className="absolute -top-40 -left-40 h-[312px] w-[575px] bg-[#e4e4e4] blur-[24px]" />
          <div className={"relative h-[24px] pl-[21px] " + locCols}>
            <Fit w={50}>Location</Fit><span />
            <Fit w={52}>Revenue</Fit>
            <Fit w={74}>Energy used</Fit>
          </div>
          <div className="relative mt-[9px]">
            {LOCATIONS.map(([n, nw, r, rw, e, ew]) => (
              <div key={n} className={"h-[75px] pl-[21px] text-[16px] " + locCols}>
                <span className="flex size-12 items-center justify-center rounded-[5px] bg-[#c6e2a6]/40 text-[#63ad45]"><BuildingIcon className="size-[22px]" /></span>
                <Fit w={nw} className="font-semibold text-[#222]">{n}</Fit>
                <Fit w={rw} className="mt-[2px] ml-[3px] font-medium text-[#666]">{r}</Fit>
                <Fit w={ew} className="mt-[3px] font-medium text-[#666]">{e}</Fit>
                <Next />
              </div>
            ))}
          </div>
        </div>
        <div className={"pt-[19px] pl-[17.500px] " + panel}>
          <Fit w={118} className="text-[17px] font-medium text-[#222]">Your chargers</Fit>
          <div className={"mt-[19.500px] h-[24px] " + chCols}>
            <Fit w={29}>Type</Fit>
            <Fit w={51}>Location</Fit>
            <Fit w={74}>Average use</Fit>
            <Fit w={108}>Usage breakdown</Fit>
          </div>
          <div className="mt-[5px]">
            {CHARGERS.map(([n, nw, p, a, b], i) => (
              <div key={n} className={"h-[77px] text-[16px] text-[#333] " + chCols}>
                <Charger className="mt-[2px] -ml-px size-[53px]" ring="#4be89b" />
                <Fit w={nw} className={i === 0 ? "-ml-[2px] font-semibold text-[#222]" : "font-medium"}>{n}</Fit>
                <Fit w={31} className="font-medium">{p}</Fit>
                <span className="flex h-[10px] w-[99px] overflow-hidden rounded-full bg-[#efefef]">
                  <i className="bg-[#6fac46]" style={{ width: a + "%" }} />
                  <i className="bg-[#fac81e]" style={{ width: b + "%" }} />
                </span>
                <Next />
              </div>
            ))}
          </div>
        </div>
      </div>
    </div>
  );
}

/* ---------- map card ---------- */

const street = { fill: "none", stroke: "#fff", strokeLinecap: "round", strokeLinejoin: "round" };

const Label = ({ len, children, ...rest }) => (
  <text textLength={len} lengthAdjust="spacingAndGlyphs" {...rest}>{children}</text>
);

function CityMap() {
  return (
    <svg viewBox="30 42 1476 1470" preserveAspectRatio="none" className="col-start-1 row-start-1 h-[581px] w-[492px]" fontFamily="Roboto, sans-serif">
      <defs>
        <clipPath id="land"><path d="M30 335 1506 287V1512H30Z" /></clipPath>
        <path id="lea" d="M1082 405C1150 412 1250 445 1345 482" />
      </defs>
      <g clipPath="url(#land)">
        <path fill="#e9e9e9" d="M30 280H1506V1512H30Z" />
        <path fill="#ecebe7" d="M1118 300H1290L1400 470 1505 640V935L1330 745 1213 625 1255 505 1205 455 1080 430 1050 400Z" />
        <path fill="#ecebe7" d="M790 430 960 420 1015 445 1190 500 1168 597 1010 545 915 532Z" />
        <path fill="#e9e9e9" d="M960 420 1010 440 1060 480 1180 515 1150 580 980 530 960 500Z" />
        <path fill="#ecebe7" d="M30 915 100 940 340 970 400 880 395 960 340 1000Z" />

        {/* streets below the water */}
        <g {...street} strokeWidth="3.500">
          <path d="M30 515 380 508M145 440 260 425M70 395 95 510M200 365 210 500M300 370 380 372M320 450 395 440M430 400 560 350 640 340M420 470 540 430M470 510 560 560M440 590 520 640 560 690M450 620 440 740M640 460 780 440 800 520M660 450 690 540M700 445 720 530M740 440 760 525M560 590 640 500 690 400" />
          <path d="M215 690C210 640 260 620 330 620M500 710C490 660 540 660 540 700M30 1020 290 1040M80 1030V1080M130 1030V1070M180 1035V1080M230 1040V1085M330 1100 380 1110 370 1190 410 1200 400 1280M310 1180 360 1190 350 1260 430 1300M345 1290 420 1370M110 1280 300 1120M30 1260 130 1180 120 1080M130 1250 300 1320M60 1330 260 1370M90 1290 240 1200 290 1215M60 1280 50 1440M130 1310 120 1440M190 1350 240 1290M350 1400 420 1420 440 1460M370 900 390 820M350 950 380 890" />
          <path d="M1280 290 1340 370M1360 330 1430 410 1470 380M1380 300 1470 450M1440 290 1480 460M1380 360 1500 330M1275 635 1330 690C1370 730 1440 720 1505 670M1410 780C1400 830 1440 830 1505 790M1320 570 1370 500" />
        </g>

        {/* water */}
        <g fill="#aadaff">
          <path d="M1506 935 1400 805 1330 745 1213 622 1240 560 1256 505 1232 472 1130 440 1070 432 1015 415 1018 440 1060 462 1150 478 1190 502 1185 560 1168 597 1090 570 1010 545 915 532 900 550 880 545 780 560 700 590 650 608 590 645 568 672 500 735 440 800 428 835 412 870 400 950 372 983 340 988 395 1035 400 1130 425 1200 473 1338 455 1358 490 1410 515 1435 530 1465 790 1480 775 1440 740 1388 720 1360 690 1270 672 1245 685 1228 650 1160 635 1080 620 1020 625 950 640 890 670 820 720 760 780 724 830 712 890 720 980 765 1060 830 1110 880 1180 965 1300 1100 1380 1185 1425 1225 1506 1300Z" />
          <path d="M830 300 820 352 850 390 900 398 950 372 982 300Z" />
          <path d="M1072 295 1055 350 1015 415 1055 402 1090 350 1120 292Z" />
          <path d="M808 425 870 445 938 450 930 512 905 512 898 550 878 545 886 505 815 490 825 462Z" />
          <path d="M30 672 150 688V722L136 740 180 772 165 780 122 742 124 722 68 715 55 800 45 800 60 712 30 708Z" />
          <path d="M178 775 230 764 290 770 325 800 320 838 280 852 215 848 182 812ZM308 662 365 655 380 765 330 768 320 815 308 812 318 728ZM322 812 432 820 425 834 322 828Z" />
          <path d="M30 905 60 940 200 960 345 978 335 996 267 990 263 1028 150 1012 30 985ZM308 845 325 845 335 900 325 922 312 900ZM30 840 120 838 118 880 30 880 30 868 100 868 102 850 30 850Z" />
          <path d="M565 420 640 392 640 412 600 428 595 445 568 440ZM470 405 550 382 552 430 475 442ZM604 575 612 570 634 596 624 602ZM1388 600 1394 602 1360 684 1354 682ZM392 1392 400 1390 420 1440 412 1442Z" />
        </g>
        <path d="M482 412 540 394V422L486 432Z" fill="#e9e9e9" />

        {/* parks */}
        <g fill="#c8e6c9">
          <path d="M640 1105 735 1088 740 1140 812 1156 808 1210 690 1243 665 1182Z" />
          <path d="M1070 1130 1095 1120 1160 1230 1252 1310 1232 1338 1190 1330 1140 1295 1110 1230Z" />
          <path d="M1240 1358 1268 1335 1320 1360 1370 1412 1345 1428 1300 1388Z" />
          <path d="M1425 1490 1450 1458 1506 1445V1512H1430Z" />
          <path d="M664 482 690 478 698 512 662 512ZM825 492 890 505 880 540 810 548ZM610 558 630 553 653 575 648 592 625 590ZM225 1228 260 1210 298 1240 300 1302 265 1275ZM268 1355 288 1360 285 1375 266 1370ZM875 305H930L925 350 885 362 862 345Z" />
        </g>
        <path d="M1434 1482 1445 1455 1506 1440V1465L1460 1475Z" fill="#aadaff" />

        {/* peninsula shore */}
        <path d="M640 890 670 820 720 760 780 724 830 712 890 720 980 765 1060 830 1110 880 1180 965 1300 1100 1425 1225 1410 1235 1290 1120 1165 990 1085 890 1030 850 960 800 880 775 810 800 768 850 755 900 690 900 650 925 628 940Z" fill="#ecebe7" />
        <ellipse cx="897" cy="898" rx="131" ry="124" fill="#e8e8e8" stroke="#f4f4f4" strokeWidth="2.500" />
        <path d="M990 980 1022 940 1042 955 1005 995Z" fill="#e8eaf0" />

        {/* ferry lines */}
        <g fill="none" stroke="#8ebcec" strokeWidth="2.200" strokeDasharray="16 8">
          <path d="M602 1465C530 1310 465 1160 465 1040 465 900 540 780 650 715 760 672 880 655 1010 680 1110 715 1215 790 1228 880 1228 920 1200 938 1172 942 1260 935 1340 975 1400 1030L1506 1128" />
          <path d="M652 1465C590 1300 520 1170 520 1070 530 930 600 820 740 750 800 720 850 708 1000 712 1080 750 1195 850 1200 942" />
        </g>
        <path d="M400 958 605 1030M1208 455 1170 650 1140 770M1128 800 1100 875 1060 920" fill="none" stroke="#e4f1fb" strokeWidth="2.500" />

        {/* railways and tunnels */}
        <g fill="none" stroke="#cfd1d4" strokeWidth="5">
          <path d="M135 335 150 440 190 520C210 560 190 590 160 590M30 565 180 572M30 580 170 588M1205 300 1260 420 1300 520 1370 640C1400 670 1450 690 1506 690M1225 300 1275 390C1350 440 1420 470 1506 475M745 310C720 360 690 385 660 400M75 1440 108 1200 105 1085M905 320C880 380 830 410 720 440L560 490 440 560" />
        </g>
        <g fill="none" strokeLinejoin="round">
          <path d="M415 490C380 520 385 560 392 600L405 705 470 770 640 878 745 970 770 1040 812 1160M425 490 500 580 568 668 650 718 790 815C835 850 845 910 840 960L828 1055" stroke="#bfbfbf" strokeWidth="13" />
          <path d="M415 490C380 520 385 560 392 600L405 705 470 770 640 878 745 970 770 1040 812 1160M425 490 500 580 568 668 650 718 790 815C835 850 845 910 840 960L828 1055" stroke="#d6d6d6" strokeWidth="9" />
        </g>

        {/* main streets */}
        <g {...street} strokeWidth="13">
          <path d="M262 365 275 430 305 490 355 575 378 610 385 680 398 730 375 815 345 900 325 1040 305 1120 298 1235 325 1370 372 1455" />
          <path d="M1290 290 1400 455 1435 500 1506 615" strokeWidth="22" />
          <path d="M765 290V345M820 388 870 405 1000 405 1090 402" strokeWidth="18" />
          <path d="M1090 402C1200 425 1320 465 1430 500" strokeWidth="12" />
        </g>
        <g {...street} strokeWidth="8">
          <ellipse cx="780" cy="373" rx="34" ry="29" />
          <ellipse cx="1438" cy="508" rx="27" ry="23" />
          <path d="M260 640C262 700 210 780 160 800L30 780M30 800 90 790M330 610C300 640 280 630 250 632M30 1055 160 1075 300 1090M1440 480 1506 465M1435 535 1506 670" />
          <path d="M887 1225 1015 1155 1160 1075M850 1005 848 1110 885 1215 960 1275 1090 1365 1195 1500M1062 1135 1105 1220 1150 1310 1350 1430 1435 1510M1265 1500 1350 1440 1460 1355" strokeWidth="9" />
        </g>
        <g {...street} strokeWidth="3.500">
          <path d="M1040 940 1165 1085 1330 1270 1440 1370M1115 1180 1200 1080M1165 1245 1260 1150M1215 1290 1320 1200 1380 1240M1255 1330 1370 1210M1310 1360 1400 1260M930 1250 1000 1190M960 1400 1040 1420 1000 1480M1050 1390C1030 1440 1060 1470 1100 1470M790 940C830 980 870 1000 920 992M700 950C700 1000 720 1020 850 1030M680 880C690 930 760 960 850 1000M870 1010C930 1010 920 1040 900 1030M865 1040C865 1100 940 1120 980 1090M940 1070C970 1080 1010 1110 1015 1150M800 1310C790 1370 830 1370 840 1330M860 1160C870 1220 860 1280 850 1260" />
          <circle cx="148" cy="801" r="10" /><circle cx="255" cy="634" r="9" /><circle cx="1015" cy="1153" r="7" />
        </g>

        {/* motorways */}
        <path d="M30 340 250 330 340 325 340 335 120 365 115 400 95 402 92 368 30 372Z" fill="#fdf3cf" />
        <g fill="none" strokeLinejoin="round" stroke="#f2c767">
          <path d="M30 373 200 352 380 342 480 322M395 338 412 400 412 490M402 345 432 490" strokeWidth="13" />
          <path d="M30 612 160 608 300 592 400 572 500 548 555 512 615 440 660 398 745 380" strokeWidth="23" />
          <path d="M828 1055 818 1150 822 1220 845 1305 900 1362 980 1410 1062 1500" strokeWidth="20" />
        </g>
        <g fill="none" strokeLinejoin="round" stroke="#feefae">
          <path d="M30 373 200 352 380 342 480 322M395 338 412 400 412 490M402 345 432 490" strokeWidth="8" />
          <path d="M30 612 160 608 300 592 400 572 500 548 555 512 615 440 660 398 745 380" strokeWidth="18" />
          <path d="M828 1055 818 1150 822 1220 845 1305 900 1362 980 1410 1062 1500" strokeWidth="15" />
        </g>

        {/* labels */}
        <g stroke="#fff" strokeWidth="4.500" paintOrder="stroke" strokeLinejoin="round">
          <g fill="#7f92b5" fontSize="36" fontWeight="500" letterSpacing="5">
            <Label x="262" y="571" len="290">BLACKWALL</Label>
            <Label x="45" y="1087" len="245">E OF DOGS</Label>
          </g>
          <Label x="31" y="1286" fontSize="31" fill="#4a4a40" len="136">e of Dogs</Label>
          <Label x="31" y="619" fontSize="27" fill="#7a5b1d" len="41">261</Label>
          <g fontSize="26" fill="#60666c">
            <Label transform="translate(256 390) rotate(72)" len="98">Cotton St</Label>
            <Label transform="translate(388 828) rotate(-76)" len="70">A1206</Label>
            <Label transform="translate(1310 336) rotate(54)" fontSize="28" len="82">A1011</Label>
            <text fontSize="27"><textPath href="#lea" textLength="270" lengthAdjust="spacingAndGlyphs">Lower Lea Crossing</textPath></text>
          </g>
          <g fill="#7b7d80">
            <Label x="724" y="833" fontSize="35" len="127">The O2</Label>
            <Label x="581" y="867" fontSize="28" len="270">Temporarily closed</Label>
          </g>
        </g>

        {/* markers */}
        <path d="M892 874C880 862 853 852 853 829a39 37 0 0 1 78 0C931 852 904 862 892 874Z" fill="#2f2f2f" />
        <path d="M896 812 874 832 888 834 886 845 909 826 894 824Z" fill="#fff" />
        <ellipse cx="912" cy="1063" rx="9" ry="8" fill="#fff" stroke="#e0364a" strokeWidth="3.500" />
        <path d="M899 1063H925" stroke="#2c3b94" strokeWidth="4.500" />
        <rect x="1131" y="1086" width="33" height="31" rx="3" fill="#1db4f3" />
        <path d="M1138 1098V1111H1157V1098M1138 1103H1157M1147.500 1091V1111M1141 1094 1155 1091" fill="none" stroke="#fff" strokeWidth="2.500" />
      </g>
    </svg>
  );
}

function MapCard() {
  return (
    <div className="col-start-1 row-start-1 mt-[656.600px] ml-[970px] h-[581px] w-[492px] [filter:drop-shadow(0_14px_14px_rgba(0,0,0,0.1))_drop-shadow(0_20px_50px_rgba(0,0,0,0.06))]">
      <div className="grid h-[581px] w-[492px] bg-white [clip-path:path('M0_38Q0_27.500_10_26.800L481_0.700Q491.700_0_491.700_12V568Q491.700_580.500_481_580L10_552.200Q0_551.500_0_540Z')]">
        <CityMap />
        <header className="col-start-1 row-start-1 flex h-[110px] origin-top-left -skew-y-[2.830deg] justify-between pt-[52.500px] pr-[30px] pl-[20px]">
          <div className="flex flex-col items-start">
            <Fit w={284} className="text-[23.500px] font-semibold text-[#1c1c1c]">The O2 Arena - Car Park 1</Fit>
            <div className="mt-[4px] flex h-[20.500px] items-center">
              <Fit w={195} className="ml-[3px] text-[12.300px] text-[#6d6d6d]">The O2 Peninsula Square, GB, SE0DX</Fit>
              <span className="ml-[23px] flex h-[20.500px] w-[67px] items-center justify-center rounded-[3px] bg-[#d3eaba] text-[10.500px] font-semibold text-[#66ab2d]">
                <Fit w={48}>Cato-Olaf</Fit>
              </span>
            </div>
          </div>
          <span className="mt-[-7px] flex size-[32px] items-center justify-center rounded-full bg-[#f0f0f1] text-[#9dabc1]">
            <Cross className="size-[12px]" />
          </span>
        </header>
      </div>
    </div>
  );
}

export default function App() {
  return (
    <div className="grid h-[1700px] w-[2466px] grid-cols-1 grid-rows-1 overflow-hidden bg-[#fefefe] font-[Inter,'Liberation_Sans',sans-serif] antialiased [font-feature-settings:'cv11']">
      <div className="col-start-1 row-start-1 flex flex-col pt-[148px]">
        <Dashboard />
        <Company />
      </div>
      <Board />
      <MapCard />
    </div>
  );
}
